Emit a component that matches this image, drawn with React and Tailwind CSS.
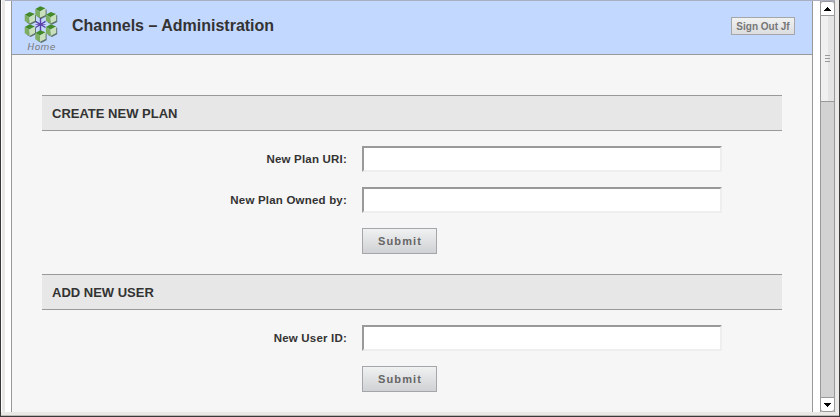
const CUBES = [
  [40.6, 12.2],
  [30, 18],
  [51.2, 18],
  [30, 30.3],
  [51.2, 30.3],
  [40.6, 36.2],
];

function Logo() {
  return (
    <svg className="block h-[38px] w-[36px]" viewBox="23 5 36 38">
      <g stroke="#5b3fa8" strokeWidth="1.4">
        <path d="M40.5 17v15M35.5 21.3l10 6.2M45.5 21.3l-10 6.2" />
        <path d="M35.5 24.5h10" strokeWidth="0.7" />
      </g>
      {CUBES.map(([x, y]) => (
        <g key={`${x}-${y}`} transform={`translate(${x} ${y})`}>
          <path d="M-3.5 4.4L.6 6.8 6 4V-2.4L5-3z" fill="#3d5240" opacity="0.75" />
          <path d="M-5.3-3.2L-.4-6 5-3.9-.6-.8z" fill="#448a2c" />
          <path d="M-5.3-3.2L-.6-.8V5.6L-5.3 3z" fill="#7cad62" />
          <path d="M5-3.9L-.6-.8V5.6L5 2.7z" fill="#c8e0bc" />
        </g>
      ))}
    </svg>
  );
}

function SectionTitle({ children }) {
  return (
    <h2 className="flex h-9 items-center border-y border-[#999] bg-[#e7e7e7] pt-[2px] pl-[10px] text-[13px] font-bold text-[#333]">
      {children}
    </h2>
  );
}

function Field({ label }) {
  return (
    <label className="flex h-[26px] items-center">
      <span className="w-[305px] pt-[2px] text-right text-[11.5px] font-bold tracking-[0.2px] text-[#333]">{label}</span>
      <input className="ml-[15px] h-[26px] w-[360px] border-2 border-t-[#999] border-r-[#eee] border-b-[#eee] border-l-[#999] bg-white px-1 outline-none" />
    </label>
  );
}

function Submit() {
  return (
    <button className="ml-[320px] h-[26px] w-[75px] border border-[#a5a6a9] bg-linear-to-b from-[#f0f1f1] to-[#d0d1d4] pl-px text-[11px] leading-none font-bold tracking-[1.15px] text-[#666]">
      Submit
    </button>
  );
}

function Scrollbar() {
  return (
    <div className="flex w-[15px] flex-col border-x border-[#999] bg-[#d2d2d2]">
      <div className="-mx-px flex h-[15px] items-center justify-center rounded-t-[3px] border border-[#999] bg-white">
        <svg width="7" height="4" shapeRendering="crispEdges"><path d="M3 0h1v1h1v1h1v1h1v1H0V3h1V2h1V1h1z" /></svg>
      </div>
      <div className="flex h-[86px] flex-col items-center justify-start gap-[2px] border-b border-[#999] bg-[linear-gradient(to_right,#f0f0f0_7px,#e4e4e4_7px)] pt-[39px]">
        <i className="h-px w-[5px] bg-[#999]" />
        <i className="h-px w-[5px] bg-[#999]" />
        <i className="h-px w-[5px] bg-[#999]" />
      </div>
      <div className="grow" />
      <div className="-mx-px flex h-[15px] items-center justify-center rounded-b-[3px] border border-[#999] bg-white">
        <svg width="7" height="4" shapeRendering="crispEdges"><path d="M0 0h7v1H6v1H5v1H4v1H3V3H2V2H1V1H0z" /></svg>
      </div>
    </div>
  );
}

export default function App() {
  return (
    <div className="flex h-[417px] w-[840px] flex-col overflow-hidden border-x border-b border-[#3a3a3a] bg-[#ebe9e7] font-['Liberation_Sans',Arial,sans-serif]">
      <div className="flex h-[412px] border-l border-white pl-[3px]">
        <div className="flex w-[830px] border-t border-[#a9aec2] bg-white pl-[6px]">
          <div className="w-[802px] border-x border-[#999] bg-[#f6f6f6]">
            <header className="flex h-[54px] items-start border-b border-[#999] bg-[#c3d8ff]">
              <a className="ml-[11px] w-[36px] pt-[4px]">
                <Logo />
                <span className="-mt-px block pl-[4.5px] font-['DejaVu_Sans',sans-serif] text-[9px] leading-[10px] tracking-[0.4px] text-[#777] italic">Home</span>
              </a>
              <h1 className="ml-[13px] pt-[15px] text-[16px] leading-[20px] font-bold text-[#333]">Channels – Administration</h1>
              <button className="mt-[16px] mr-[17px] ml-auto h-[18px] w-[64px] border border-[#a5a6a9] bg-linear-to-b from-[#f0f1f1] to-[#dcdddf] pt-[2px] text-[10px] leading-none font-bold whitespace-nowrap text-[#777]">
                Sign Out Jf
              </button>
            </header>
            <main className="pt-10 pr-[30px] pl-[30px]">
              <SectionTitle>CREATE NEW PLAN</SectionTitle>
              <div className="flex flex-col gap-[15px] pt-[15px] pb-5">
                <Field label="New Plan URI:" />
                <Field label="New Plan Owned by:" />
                <Submit />
              </div>
              <SectionTitle>ADD NEW USER</SectionTitle>
              <div className="flex flex-col gap-[15px] pt-[15px]">
                <Field label="New User ID:" />
                <Submit />
              </div>
            </main>
          </div>
          <div className="w-[7px]" />
          <Scrollbar />
        </div>
      </div>
      <div className="h-[3px]" />
      <div className="h-px bg-[#bdb9b5]" />
    </div>
  );
}
